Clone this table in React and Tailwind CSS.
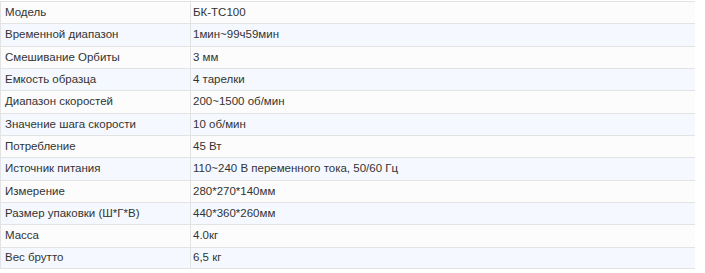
const specs = [
  ["Модель", "БК-ТС100"],
  ["Временной диапазон", "1мин~99ч59мин"],
  ["Смешивание Орбиты", "3 мм"],
  ["Емкость образца", "4 тарелки"],
  ["Диапазон скоростей", "200~1500 об/мин"],
  ["Значение шага скорости", "10 об/мин"],
  ["Потребление", "45 Вт"],
  ["Источник питания", "110~240 В переменного тока, 50/60 Гц"],
  ["Измерение", "280*270*140мм"],
  ["Размер упаковки (Ш*Г*В)", "440*360*260мм"],
  ["Масса", "4.0кг"],
  ["Вес брутто", "6,5 кг"],
];

const App = () => {
  return (
    <div className="w-[705px] h-[273px] bg-white pt-px font-['Liberation_Sans',sans-serif] text-[11.5px] text-[#333]">
      <div className="w-[695px] border-l border-[#e3e3e3]">
        {specs.map(([label, value], i) => (
          <div
            key={label}
            className={`flex h-[22.33px] items-center border-t border-[#e3e3e3] ${
              i % 2 === 0 ? "bg-[#fcfcfc]" : "bg-[#f5f9ff]"
            } ${i === specs.length - 1 ? "border-b" : ""}`}
          >
            <div className="flex h-full w-[190px] items-center border-r border-[#e3e3e3] pl-[4px]">
              {label}
            </div>
            <div className="pl-[2px]">{value}</div>
          </div>
        ))}
      </div>
    </div>
  );
};

export default App;
